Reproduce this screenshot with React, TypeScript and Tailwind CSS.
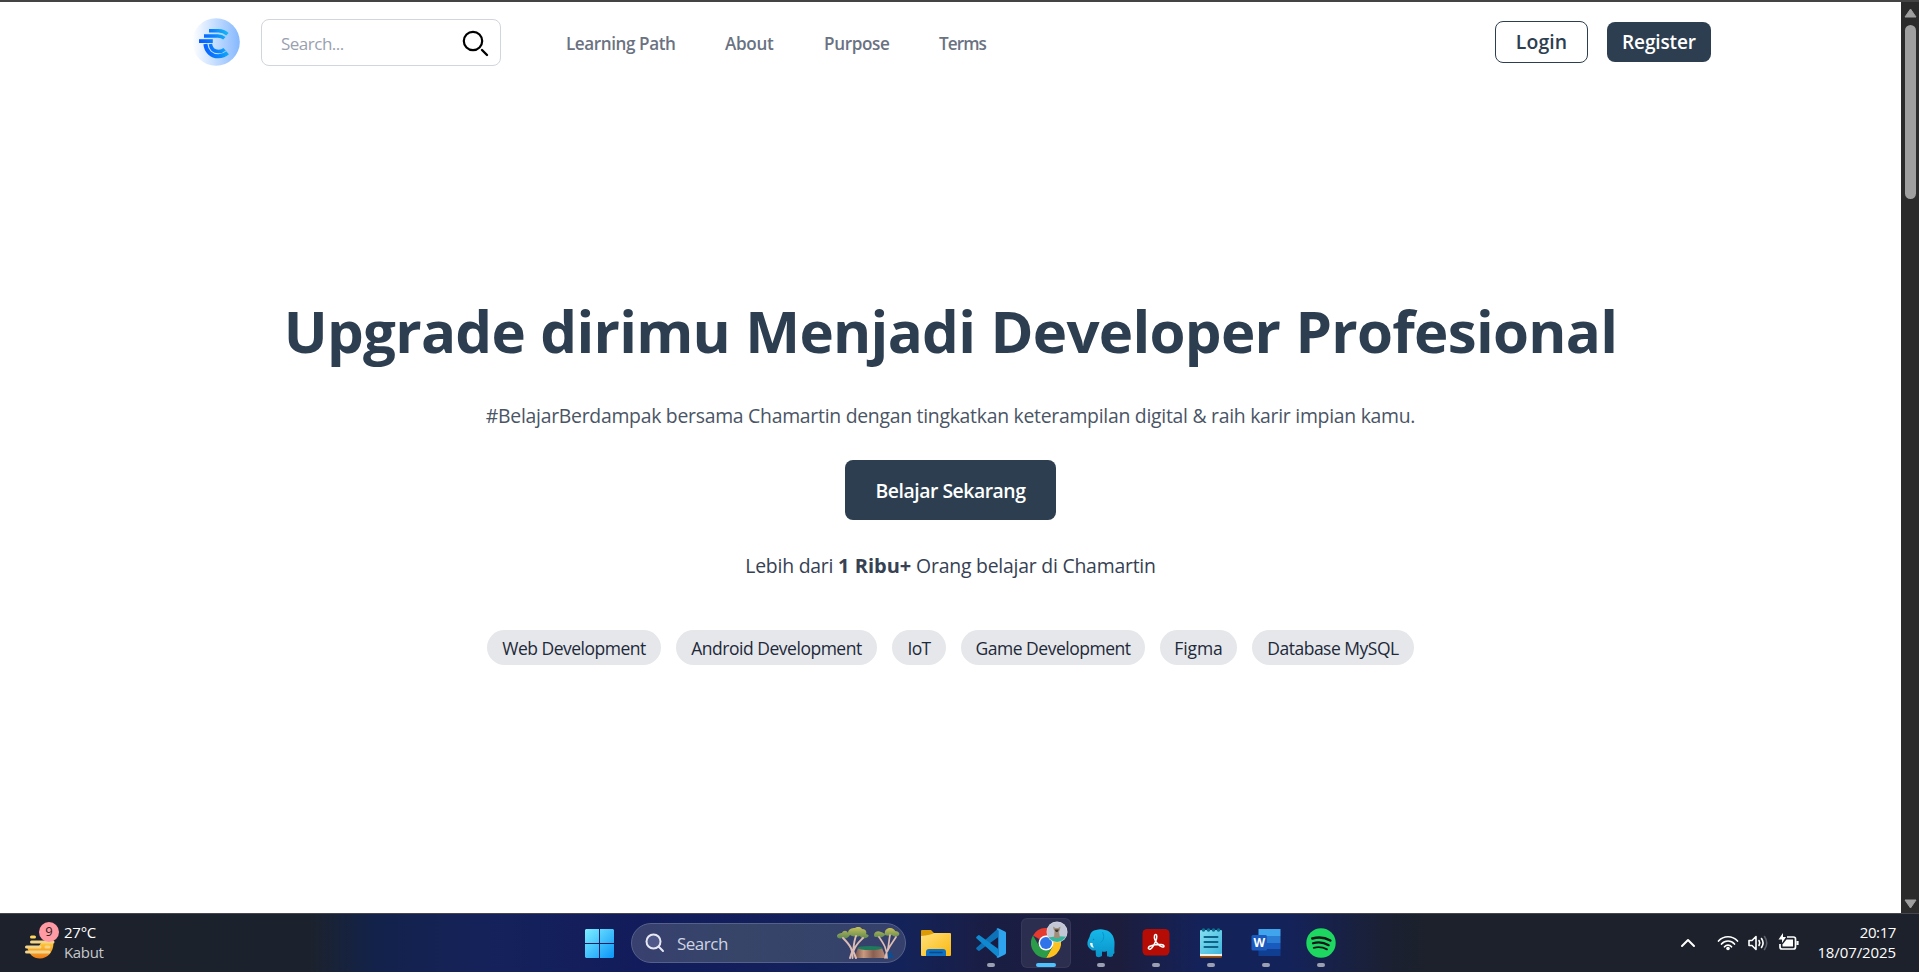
import type { ReactNode } from "react";

function Logo() {
  return (
    <svg className="mb-0.5 size-12 shrink-0" viewBox="0 0 48 48" fill="none">
      <defs>
        <linearGradient id="disc" x1="0" y1="0" x2="1" y2="0">
          <stop offset="0" stopColor="#ffffff" />
          <stop offset="1" stopColor="#85b8ff" />
        </linearGradient>
        <linearGradient id="mark" gradientUnits="userSpaceOnUse" x1="9" y1="28" x2="36" y2="22">
          <stop offset="0" stopColor="#0a5dff" />
          <stop offset="0.55" stopColor="#0b84fb" />
          <stop offset="1" stopColor="#10b4f4" />
        </linearGradient>
      </defs>
      <circle cx="24" cy="24" r="23.8" fill="url(#disc)" />
      <g stroke="url(#mark)" strokeWidth="3.500">
        <path d="M17 12.8H26.6C30.3 12.8 33 14 35.4 16.3" />
        <path d="M12 17.9H25.8C28.6 17.9 30.4 18.4 32.4 20.2" />
        <path d="M7 23.1H20.8" strokeWidth="3.800" />
        <path d="M13.4 26C14 33.4 19.4 38.3 26.4 38.3C30.2 38.3 33 37.2 35.6 34.8" strokeWidth="4" />
        <path d="M18.4 26C18.9 30.6 22 33.4 26.6 33.4C29 33.4 31 32.8 32.6 31.2" />
      </g>
    </svg>
  );
}

const navItems = [
  { label: "Learning Path", cls: "w-[109px] mr-[50px] tracking-[-0.42px]" },
  { label: "About", cls: "w-[50px] mr-[49px] tracking-[-0.31px]" },
  { label: "Purpose", cls: "w-[66px] mr-[49px] tracking-[-0.36px]" },
  { label: "Terms", cls: "w-[47px] tracking-[-0.9px]" },
];

function Header() {
  return (
    <header className="flex h-[81px] items-center pl-[192px] pr-[190px]">
      <Logo />
      <div className="ml-[21px] flex h-[47px] w-60 items-center justify-between rounded-lg border border-gray-300 pl-[19px] pr-[11px]">
        <span className="pt-0.5 text-[17px] tracking-[-0.5px] text-gray-400">Search...</span>
        <svg className="mt-0.5 size-[27px]" viewBox="0 0 27 27" fill="none" stroke="#000">
          <circle cx="11" cy="11" r="9.2" strokeWidth="2.2" />
          <path d="M20 20L25 25" strokeWidth="2.4" strokeLinecap="round" />
        </svg>
      </div>
      <nav className="ml-[65px] flex pt-0.5 text-[17.1px] font-semibold text-gray-500">
        {navItems.map((n) => (
          <a key={n.label} className={`whitespace-nowrap ${n.cls}`}>{n.label}</a>
        ))}
      </nav>
      <div className="mb-0.5 ml-auto flex items-center gap-[19px]">
        <button className="h-[42px] w-[93px] rounded-lg border border-[#2c3e50] pt-px text-[19.4px] font-[550] tracking-[0.15px] text-[#2c3e50]">
          Login
        </button>
        <button className="h-10 w-[104px] rounded-lg bg-[#2c3e50] pt-0.5 text-[19px] font-semibold tracking-[-0.13px] text-white">
          Register
        </button>
      </div>
    </header>
  );
}

const topics = [
  { label: "Web Development", cls: "w-[174px] tracking-[-0.5px]" },
  { label: "Android Development", cls: "w-[201px] tracking-[-0.48px]" },
  { label: "IoT", cls: "w-[54px] tracking-[-0.7px]" },
  { label: "Game Development", cls: "w-[184px] tracking-[-0.48px]" },
  { label: "Figma", cls: "w-[77px] tracking-[-0.1px]" },
  { label: "Database MySQL", cls: "w-[162px] tracking-[-0.5px]" },
];

function Hero() {
  return (
    <section className="flex flex-col items-center pt-[218px] text-[19.4px]">
      <h1 className="whitespace-nowrap text-[58.2px] leading-[60px] font-bold tracking-[-0.72px] text-[#2c3e50] [word-spacing:0.8px]">
        Upgrade dirimu Menjadi Developer Profesional
      </h1>
      <p className="mt-[41px] whitespace-nowrap leading-7 tracking-[-0.276px] text-gray-600">
        #BelajarBerdampak bersama Chamartin dengan tingkatkan keterampilan digital &amp; raih karir impian kamu.
      </p>
      <button className="mt-[30px] h-[60px] w-[211px] rounded-lg bg-[#2c3e50] pt-0.5 font-semibold tracking-[-0.48px] text-white">
        Belajar Sekarang
      </button>
      <p className="mt-8 whitespace-nowrap leading-7 tracking-[-0.22px] text-gray-700">
        Lebih dari <b className="text-[20px] tracking-normal">1 Ribu+</b> Orang belajar di Chamartin
      </p>
      <ul className="mt-[50px] flex gap-[15px] text-[17.5px] text-gray-800">
        {topics.map((t) => (
          <li key={t.label} className={`flex h-[35px] items-center justify-center whitespace-nowrap rounded-full bg-gray-200 pt-0.5 ${t.cls}`}>
            {t.label}
          </li>
        ))}
      </ul>
    </section>
  );
}

function ScrollBar() {
  return (
    <div className="flex w-[18px] flex-col items-center bg-[#2b2b2b] pt-1.5 pb-1">
      <svg className="h-2.5 w-[13px] shrink-0" viewBox="0 0 13 10">
        <path d="M6.5 1L12 9H1Z" fill="#9f9f9f" stroke="#9f9f9f" strokeLinejoin="round" />
      </svg>
      <div className="mt-[7px] h-[174px] w-[11px] shrink-0 rounded-full bg-[#9f9f9f]" />
      <svg className="mt-auto h-2.5 w-[13px] shrink-0" viewBox="0 0 13 10">
        <path d="M6.5 9L12 1H1Z" fill="#9f9f9f" stroke="#9f9f9f" strokeLinejoin="round" />
      </svg>
    </div>
  );
}

function WeatherIcon() {
  return (
    <svg className="h-[37px] w-[35px]" viewBox="0 0 35 37">
      <defs>
        <linearGradient id="sun" x1="0" y1="0" x2="0" y2="1">
          <stop offset="0" stopColor="#ffc93a" />
          <stop offset="1" stopColor="#ee7d17" />
        </linearGradient>
      </defs>
      <path d="M2 24C4 31 8 35.500 15 35.500C22.500 35.500 28.500 29 28.500 20L16 20L14 23Z" fill="url(#sun)" />
      <g stroke="#f5d488" strokeWidth="3" strokeLinecap="round">
        <path d="M6.500 14H9.500" stroke="#ffd75e" />
        <path d="M6.500 19H28" />
        <path d="M1.500 24H15M21 24H24" />
        <path d="M1.500 29H24" />
      </g>
    </svg>
  );
}

function StartIcon() {
  return (
    <svg className="size-[29px]" viewBox="0 0 29 29">
      <defs>
        <linearGradient id="win" gradientUnits="userSpaceOnUse" x1="0" y1="0" x2="29" y2="29">
          <stop offset="0" stopColor="#7deeff" />
          <stop offset="1" stopColor="#0a95f8" />
        </linearGradient>
      </defs>
      <path d="M1 0H14V14H0V1ZM15 0H28L29 1V14H15ZM0 15H14V29H1L0 28ZM15 15H29V28L28 29H15Z" fill="url(#win)" />
    </svg>
  );
}

function Trees() {
  return (
    <svg className="h-[32px] w-[64px]" viewBox="0 0 64 32">
      <defs>
        <linearGradient id="leaf" x1="0" y1="0" x2="0" y2="1">
          <stop offset="0" stopColor="#c8c05a" />
          <stop offset="1" stopColor="#5f8a52" />
        </linearGradient>
        <linearGradient id="stump" x1="0" y1="0" x2="1" y2="0">
          <stop offset="0" stopColor="#6d4a44" />
          <stop offset="0.3" stopColor="#c89a80" />
          <stop offset="0.6" stopColor="#8a5f52" />
          <stop offset="1" stopColor="#b98d78" />
        </linearGradient>
      </defs>
      <path d="M50 31L54 23L58 31Z" fill="#0e4d92" />
      <path d="M18 31L22 21H46L50 31Z" fill="url(#stump)" />
      <ellipse cx="34" cy="21" rx="12.500" ry="2" fill="#1f7a5c" />
      <g fill="url(#leaf)">
        <path d="M1 9C1 7 4 6 6 6C7 3 11 3 12 6C12 2 16 1 19 1C22-1 25 0 26 2C30 2 31 5 30 7C34 8 33 10 30 11C27 12 25 11 24 9C21 10 17 10 14 8C12 11 10 12 7 11C3 12 1 11 1 9Z" />
        <path d="M38 8C38 5 42 3 45 5C47 6 49 6 49 8C48 3 51 1 54 1C57 1 59 3 59 4C63 4 64 7 63 8C61 10 58 10 56 8C54 9 51 9 49 8C46 11 43 11 41 10C39 10 38 10 38 8Z" />
      </g>
      <g stroke="#dcbcb4" fill="none" strokeLinecap="round">
        <path d="M16.500 31C17 23 15 19 7 11M17 25C18 17 18 14 20 9M17.500 24C20 17 24 14 27 11" strokeWidth="1.900" />
        <path d="M14 31L16 25M20 31L17.500 25" strokeWidth="2" />
        <path d="M51 31C51 22 48 17 43 10M51.500 24C53 17 53 13 54 8M51.500 24C54 18 57 15 60 10M49 31L51 24" strokeWidth="1.700" />
      </g>
    </svg>
  );
}

function FolderIcon() {
  return (
    <svg className="size-[30px]" viewBox="0 0 30 30">
      <defs>
        <linearGradient id="folder" x1="0" y1="0" x2="1" y2="1">
          <stop offset="0" stopColor="#ffe07a" />
          <stop offset="1" stopColor="#fbb80f" />
        </linearGradient>
      </defs>
      <path d="M0 3Q0 2 1 2H10L13 5H20V10H0Z" fill="#dc9a06" />
      <path d="M0 8Q10 7 13 5H29Q30 5 30 6V27Q30 28 29 28H1Q0 28 0 27Z" fill="url(#folder)" />
      <path d="M5 28V24Q5 21 8 21H22Q25 21 25 24V28Z" fill="#0f6fc0" />
      <path d="M9 24.500H21" stroke="#064a8c" strokeWidth="1.500" strokeLinecap="round" />
    </svg>
  );
}

function VsCodeIcon() {
  return (
    <svg className="size-[30px]" viewBox="0 0 30 30">
      <path d="M22 0.500V9.200L3.500 22.700Q2.700 23.200 2 22.500L0.500 21.200Q-0.200 20.400 0.600 19.600Z" fill="#0d72b8" />
      <path d="M22 29.500V20.800L3.500 7.300Q2.700 6.800 2 7.500L0.500 8.800Q-0.200 9.600 0.600 10.400Z" fill="#1189d0" />
      <path d="M22.300 0.300L29 3.600Q30 4.100 30 5V25Q30 25.900 29 26.400L22.300 29.700Q21 30 20.500 29L22.300 27.500V2.500L20.500 1Q21 0 22.300 0.300Z" fill="#2ea4ef" />
    </svg>
  );
}

function ChromeIcon() {
  return (
    <svg className="size-[30px]" viewBox="0 0 30 30">
      <path d="M15 15L2 7.500A15 15 0 0 1 28 7.500Z" fill="#e53a2e" />
      <path d="M15 7.500H28A15 15 0 0 1 15 30L21.500 18.700Z" fill="#fcc31e" />
      <path d="M2 7.500A15 15 0 0 0 15 30L21.500 18.700L8.500 18.700Z" fill="#2b9c48" />
      <circle cx="15" cy="15" r="7.500" fill="#fff" />
      <circle cx="15" cy="15" r="6" fill="#2f74e8" />
    </svg>
  );
}

function ProfileBadge() {
  return (
    <svg className="absolute top-[3px] left-[25px] size-[22px]" viewBox="0 0 22 22">
      <clipPath id="face"><circle cx="11" cy="11" r="10" /></clipPath>
      <circle cx="11" cy="11" r="10.500" fill="#d5dae6" />
      <g clipPath="url(#face)">
        <rect width="22" height="22" fill="#c2c7d6" />
        <path d="M0 17Q11 14 22 16V22H0Z" fill="#35b79a" />
        <path d="M8 17L8.500 10L7.500 8L7 5.500L9.500 7H12L14.500 5.500L14 8.500L13 11L14 17Z" fill="#a08e78" />
        <path d="M8.500 8.500H13L11.500 11H10Z" fill="#3d3632" />
      </g>
    </svg>
  );
}

function ElephantIcon() {
  return (
    <svg className="size-[30px]" viewBox="0 0 30 30">
      <defs>
        <linearGradient id="ele" x1="0" y1="0" x2="0" y2="1">
          <stop offset="0" stopColor="#16b9ea" />
          <stop offset="1" stopColor="#0a93c9" />
        </linearGradient>
      </defs>
      <path d="M10 2C13 1 16 1 19 2C25 3 28 8 28.500 14C28.700 18 28 22 28.500 25L27 26.500V28C25 29.500 22 29 21 28V23C19 24 17 24 16 23.500V28C14 29.500 11 29.500 10 28L9.500 22C8 23 6 22.500 5 21.500C2 20 1 17 1.500 14C2 11 4 9 4 7C5 4 7 2.500 10 2Z" fill="url(#ele)" />
      <path d="M16.500 4C18.500 8 18 12.500 14.500 14.500" fill="none" stroke="#0a95cc" strokeWidth="1" />
      <path d="M4 15C4.300 18.500 6 20 8 19.300C6.800 18.500 6.500 17 6.500 15Z" fill="#fff" />
      <circle cx="7.500" cy="11.500" r="0.700" fill="#0782b5" />
    </svg>
  );
}

function AcrobatIcon() {
  return (
    <svg className="size-[30px]" viewBox="0 0 30 30">
      <rect x="1.500" y="1" width="27" height="26.500" rx="4.500" fill="#b50d05" />
      <path d="M7.500 20.500C6.500 18.800 10 17.500 14 16.800C18 16.100 23 16.300 23 18.300C23 20 19.500 18.800 17 16.300C14.500 13.800 13 10 13.500 7.700C13.900 6 15.800 6.200 15.800 8.500C15.800 11 14 15 12.300 17.800C10.800 20.300 8.500 22.300 7.500 20.500Z" fill="none" stroke="#fff" strokeWidth="1.500" />
    </svg>
  );
}

function NotepadIcon() {
  return (
    <svg className="size-[30px]" viewBox="0 0 30 30">
      <defs>
        <linearGradient id="note" x1="0" y1="0" x2="1" y2="1">
          <stop offset="0" stopColor="#86e0f2" />
          <stop offset="1" stopColor="#3fb6dc" />
        </linearGradient>
      </defs>
      <path d="M4 27H26V28.500Q26 29.700 24.800 29.700H5.200Q4 29.700 4 28.500Z" fill="#a4560f" />
      <rect x="4" y="24" width="22" height="4" fill="#f5f1e8" />
      <rect x="4" y="2" width="22" height="24" rx="1" fill="url(#note)" />
      <path d="M8.500 9H21.500M8.500 14H21.500M8.500 19H21.500" stroke="#0d6488" strokeWidth="2" strokeLinecap="round" />
      <g fill="#0d6f8e">
        <circle cx="7.500" cy="2" r="1.800" />
        <circle cx="12.500" cy="2" r="1.800" />
        <circle cx="17.500" cy="2" r="1.800" />
        <circle cx="22.500" cy="2" r="1.800" />
      </g>
    </svg>
  );
}

function WordIcon() {
  return (
    <div className="relative size-[30px]">
      <svg className="size-[30px]" viewBox="0 0 30 30">
        <rect x="7.500" y="1" width="22" height="7" fill="#41a5ee" />
        <rect x="7.500" y="8" width="22" height="7" fill="#2b7cd3" />
        <rect x="7.500" y="15" width="22" height="6.500" fill="#185abd" />
        <rect x="7.500" y="21.500" width="22" height="6.500" fill="#103f91" />
        <rect x="0.500" y="7" width="15.500" height="15.500" rx="1.500" fill="#1b5bbe" />
      </svg>
      <span className="absolute top-[7px] left-[0.5px] w-[15.5px] text-center text-[12px] leading-[15px] font-bold text-white">W</span>
    </div>
  );
}

function SpotifyIcon() {
  return (
    <svg className="size-[30px]" viewBox="0 0 30 30" fill="none" stroke="#12151b" strokeLinecap="round">
      <circle cx="15" cy="15" r="14.700" fill="#1ed760" stroke="none" />
      <path d="M6.300 10.500C12 8.900 19 9.400 24.300 12.500" strokeWidth="2.600" />
      <path d="M7 15.300C12 13.900 18 14.500 22.700 17.200" strokeWidth="2.200" />
      <path d="M7.700 19.800C12 18.700 17 19.200 21 21.400" strokeWidth="1.800" />
    </svg>
  );
}

type TaskApp = { name: string; icon: ReactNode; state: "closed" | "open" | "active" };

const apps: TaskApp[] = [
  { name: "files", icon: <FolderIcon />, state: "closed" },
  { name: "code", icon: <VsCodeIcon />, state: "open" },
  { name: "chrome", icon: <ChromeIcon />, state: "active" },
  { name: "elephant", icon: <ElephantIcon />, state: "open" },
  { name: "acrobat", icon: <AcrobatIcon />, state: "open" },
  { name: "notepad", icon: <NotepadIcon />, state: "open" },
  { name: "word", icon: <WordIcon />, state: "open" },
  { name: "spotify", icon: <SpotifyIcon />, state: "open" },
];

function AppTile({ app }: { app: TaskApp }) {
  const active = app.state === "active";
  return (
    <div className={`relative flex h-[50px] w-[50px] flex-col items-center rounded-md pt-2.5 ${active ? "bg-white/8 ring-1 ring-white/5 ring-inset" : ""}`}>
      {app.icon}
      {active && <ProfileBadge />}
      {active && <span className="mt-[5px] h-1 w-5 rounded-full bg-[#4cc2ff]" />}
      {app.state === "open" && <span className="mt-[5px] h-1 w-2 rounded-full bg-[#9a9fb2]" />}
    </div>
  );
}

function Tray() {
  return (
    <div className="ml-auto flex items-center pr-[23px] text-[15px] text-white">
      <svg className="h-[10px] w-4" viewBox="0 0 16 10" fill="none" stroke="#fff" strokeWidth="2" strokeLinecap="round" strokeLinejoin="round">
        <path d="M2 8L8 2L14 8" />
      </svg>
      <svg className="ml-[21px] h-4 w-[22px]" viewBox="0 0 22 16" fill="none" stroke="#fff" strokeWidth="1.700" strokeLinecap="round">
        <path d="M1.500 6C6.500 0.300 15.500 0.300 20.500 6" />
        <path d="M4.500 9C8 5 14 5 17.500 9" />
        <path d="M7.500 11.800C9.500 9.500 12.500 9.500 14.500 11.800" />
        <circle cx="11" cy="13.500" r="1.800" fill="#fff" stroke="none" />
      </svg>
      <svg className="ml-[9px] h-4 w-[21px]" viewBox="0 0 21 16" fill="none" stroke="#fff" strokeWidth="1.600" strokeLinecap="round" strokeLinejoin="round">
        <path d="M1 5.500H4L8 1.500V14.500L4 10.500H1Z" />
        <path d="M11 5.500Q12.500 8 11 10.500" />
        <path d="M13.500 3.500Q16.700 8 13.500 12.500" />
        <path d="M16.500 1.500Q21 8 16.500 14.500" stroke="#5b606a" />
      </svg>
      <svg className="mb-0.5 ml-[9px] h-[18px] w-[21px]" viewBox="0 0 21 18" fill="none" stroke="#fff" strokeWidth="1.700">
        <path d="M9 4H15.500Q17.500 4 17.500 6V14Q17.500 16 15.500 16H4Q2 16 2 14V11" />
        <path d="M8.500 6.500H15V13.500H4.500V11.500Z" fill="#fff" stroke="none" />
        <path d="M19.500 8V12" strokeWidth="2.200" />
        <path d="M5 0V4H8L4 10V6.500H0.500Z" fill="#fff" stroke="none" />
      </svg>
      <div className="mb-0.5 ml-[20px] flex w-[77px] flex-col items-end text-right leading-5">
        <span className="tracking-[-0.4px]">20:17</span>
        <span className="tracking-[-0.1px]">18/07/2025</span>
      </div>
    </div>
  );
}

function Taskbar() {
  return (
    <footer className="flex h-[59px] items-center border-t border-[#45464f] bg-[linear-gradient(90deg,#1c212b_0px,#1c222d_310px,#12224a_375px,#15225a_480px,#121c5c_640px,#13235a_900px,#1a1d43_990px,#1c1d3d_1120px,#14225a_1200px,#14225a_1290px,#1b2033_1385px,#1c212b_1430px)]">
      <div className="flex w-[585px] items-center pb-0.5">
        <div className="relative -mt-px ml-[25px]">
          <WeatherIcon />
          <span className="absolute -top-px left-[14px] flex size-[20px] items-center justify-center rounded-full bg-[#ff99a4] text-[13px] text-[#2b1d20]">9</span>
        </div>
        <div className="ml-[4px] text-[15px] leading-5 text-white">
          <div className="tracking-[-0.25px]">27°C</div>
          <div className="tracking-[-0.35px] text-[#c6c8cc]">Kabut</div>
        </div>
      </div>
      <StartIcon />
      <div className="ml-[17px] flex h-10 w-[275px] items-center rounded-full border border-[#56618a] bg-[linear-gradient(90deg,#38406f,#364568_40%,#35406c)] pr-[5px] pl-[13px] text-[17px] text-[#cfd3e2]">
        <svg className="size-[20px]" viewBox="0 0 20 20" fill="#50598a" stroke="#e6e8f2" strokeWidth="2" strokeLinecap="round">
          <circle cx="8.500" cy="8.500" r="7" />
          <path d="M13.800 13.800L18 18" />
        </svg>
        <span className="ml-[12px] pt-px tracking-[-0.5px]">Search</span>
        <div className="ml-auto"><Trees /></div>
      </div>
      <div className="ml-[5px] flex gap-[5px]">
        {apps.map((a) => <AppTile key={a.name} app={a} />)}
      </div>
      <Tray />
    </footer>
  );
}

export default function App() {
  return (
    <div className="flex h-[972px] w-[1919px] flex-col overflow-hidden bg-white font-['Open_Sans','Noto_Sans',sans-serif]">
      <div className="h-0.5 shrink-0 bg-[#444444]" />
      <div className="flex h-[911px] shrink-0">
        <main className="flex-1">
          <Header />
          <Hero />
        </main>
        <ScrollBar />
      </div>
      <Taskbar />
    </div>
  );
}
